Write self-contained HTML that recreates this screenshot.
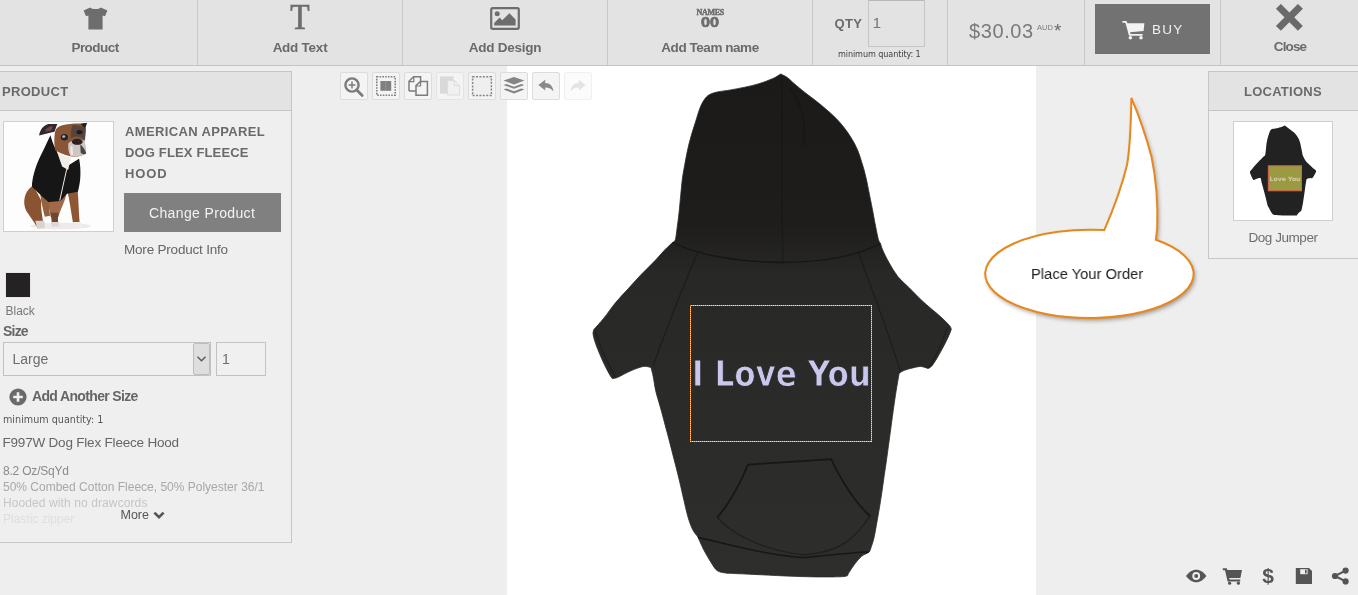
<!DOCTYPE html>
<html><head><meta charset="utf-8"><title>Designer</title>
<style>
*{box-sizing:border-box;margin:0;padding:0}
html,body{width:1358px;height:595px;overflow:hidden}
body{background:#eee;font-family:"Liberation Sans",sans-serif;color:#6b6b6b;position:relative}
.abs{position:absolute}
#toolbar{position:absolute;left:0;top:0;width:1358px;height:66px;background:#e3e3e3;border-bottom:1px solid #c4c4c4}
.sep{position:absolute;top:0;width:1px;height:65px;background:#c8c8c8}
.tlabel{position:absolute;top:40px;font-weight:bold;font-size:13.5px;line-height:16px;color:#6a6a6a;text-align:center;white-space:nowrap;letter-spacing:-0.25px}
#canvas{position:absolute;left:507px;top:66px;width:529px;height:529px;background:#fff}
#lpanel{position:absolute;left:-1px;top:71px;width:293px;height:472px;border:1px solid #c6c6c6;background:#efefef}
#lhead{position:absolute;left:0;top:0;width:291px;height:39px;background:#e3e3e3;border-bottom:1px solid #c6c6c6}
.mont{font-weight:bold;color:#6a6a6a}
#rpanel{position:absolute;left:1208px;top:71px;width:152px;height:188px;border:1px solid #c6c6c6;background:#efefef}
#rhead{position:absolute;left:0;top:0;width:150px;height:39px;background:#e3e3e3;border-bottom:1px solid #c6c6c6}
.t{position:absolute;white-space:nowrap}
#toolbar,#lpanel,#rpanel,#canvas,#pyo{will-change:transform}
.tb{position:absolute;top:72px;width:28px;height:28px;border:1px solid #dcdcdc;border-radius:2px;background:#f4f4f4}
</style></head><body>
<div id="canvas">
<svg class="abs" style="left:0;top:0" width="529" height="529" viewBox="0 0 529 529">
<defs><clipPath id="hclip"><path d="M273.7 8.0 C272.4 8.7 269.7 10.8 266.1 12.4 C262.5 14.0 256.7 16.2 252.0 17.7 C247.3 19.2 242.5 20.2 237.8 21.2 C233.1 22.2 228.1 23.1 223.7 23.9 C219.3 24.7 214.8 25.0 211.3 25.8 C207.8 26.6 204.8 27.3 202.5 28.6 C200.2 29.9 198.8 31.5 197.2 33.8 C195.6 36.1 194.3 38.6 192.8 42.4 C191.3 46.2 189.8 51.9 188.3 56.6 C186.8 61.3 185.2 66.0 183.9 70.7 C182.6 75.4 181.4 80.1 180.4 84.8 C179.4 89.5 178.5 94.5 177.7 99.0 C176.9 103.5 176.2 106.6 175.5 111.7 C174.8 116.7 174.3 123.4 173.7 129.3 C173.1 135.2 172.6 141.7 172.0 147.0 C171.4 152.3 170.8 156.8 170.2 161.2 C169.6 165.6 169.1 171.0 168.4 173.5 C167.7 176.0 166.2 175.8 165.8 176.2 C164.4 177.5 160.7 180.9 157.4 184.3 C154.1 187.7 150.1 192.5 146.1 196.6 C142.1 200.8 137.7 204.8 133.5 209.2 C129.3 213.6 125.1 218.5 120.9 223.1 C116.7 227.7 112.3 232.1 108.3 236.9 C104.3 241.7 100.5 247.7 96.9 252.1 C93.3 256.5 88.6 261.5 86.9 263.4 C86.8 264.2 85.7 265.7 86.1 268.4 C86.5 271.1 87.8 275.4 89.4 279.8 C91.0 284.2 93.6 290.3 95.7 294.9 C97.8 299.5 100.4 304.6 102.0 307.5 C103.6 310.4 104.7 311.8 105.3 312.6 C106.2 312.4 107.8 312.6 110.8 311.3 C113.8 310.0 119.2 306.8 123.4 305.0 C127.6 303.2 132.6 301.1 136.0 300.5 C139.4 299.9 142.7 301.3 144.0 301.5 C144.3 302.9 145.3 306.1 146.1 310.0 C146.9 313.9 147.6 320.0 148.8 325.2 C150.0 330.4 151.4 334.2 153.3 341.0 C155.2 347.8 157.5 356.7 160.0 366.0 C162.5 375.3 165.9 388.8 168.0 397.0 C170.1 405.2 171.0 408.7 172.5 415.0 C174.0 421.3 175.6 428.6 177.0 434.6 C178.4 440.6 179.6 446.3 181.0 451.1 C182.4 455.9 184.0 460.2 185.6 463.5 C187.2 466.8 189.9 469.5 190.7 470.7 C191.7 472.9 194.7 479.8 196.9 484.1 C199.1 488.4 201.9 493.1 204.1 496.5 C206.3 499.9 207.7 502.9 210.3 504.7 C212.9 506.5 218.1 506.8 219.6 507.2 C224.1 507.4 236.8 507.9 246.4 508.4 C256.0 508.8 267.0 509.5 277.3 509.9 C287.6 510.3 298.3 510.8 308.3 510.9 C318.3 511.0 331.6 511.0 337.1 510.5 C342.6 510.0 340.5 508.2 341.2 507.8 C342.2 506.2 345.2 501.4 347.4 498.5 C349.6 495.6 352.2 492.3 354.6 490.3 C357.0 488.2 360.3 487.6 361.9 486.2 C363.4 484.8 363.6 482.7 363.9 482.0 C364.4 480.3 366.0 476.2 367.0 471.7 C368.0 467.2 369.0 461.4 370.1 455.2 C371.2 449.0 372.5 441.5 373.6 434.6 C374.7 427.7 375.7 420.4 376.6 414.0 C377.5 407.6 378.0 404.5 379.2 396.2 C380.4 387.9 382.3 373.5 383.6 364.0 C384.9 354.5 386.0 346.0 387.0 339.0 C388.0 332.0 388.8 327.2 389.6 322.0 C390.5 316.8 391.7 309.9 392.1 307.5 C392.7 307.1 394.0 305.8 395.9 305.0 C397.8 304.2 400.5 303.2 403.4 302.5 C406.3 301.8 410.6 300.5 413.5 300.5 C416.4 300.5 419.8 302.2 421.1 302.5 C421.7 302.1 423.3 301.7 424.8 300.0 C426.3 298.3 428.0 295.5 429.9 292.4 C431.8 289.2 434.3 284.7 436.2 281.1 C438.1 277.5 439.9 273.9 441.2 271.0 C442.6 268.1 443.8 264.7 444.3 263.4 C444.0 262.8 444.3 261.7 442.5 259.6 C440.7 257.5 436.7 253.5 433.7 250.8 C430.8 248.1 428.2 246.1 424.8 243.2 C421.4 240.3 417.3 236.8 413.5 233.2 C409.7 229.6 406.0 225.6 402.2 221.8 C398.4 218.0 394.2 214.7 390.8 210.5 C387.4 206.3 384.5 201.0 382.0 196.6 C379.5 192.2 377.1 187.2 375.7 184.0 C374.3 180.8 373.9 178.6 373.5 177.5 C373.1 176.8 372.2 176.2 371.4 173.5 C370.6 170.8 369.7 165.6 368.8 161.2 C367.9 156.8 367.1 152.3 366.1 147.0 C365.1 141.7 363.8 135.2 362.6 129.3 C361.4 123.4 360.2 116.7 359.0 111.7 C357.8 106.6 357.0 103.5 355.6 99.0 C354.2 94.5 352.6 88.9 350.9 84.8 C349.2 80.7 347.7 77.7 345.6 74.2 C343.6 70.7 341.2 67.1 338.6 63.6 C336.0 60.1 333.0 56.4 329.7 53.0 C326.5 49.6 322.6 46.4 319.1 43.3 C315.6 40.2 312.0 37.3 308.5 34.5 C305.0 31.7 301.4 29.3 297.9 26.5 C294.4 23.7 290.2 20.2 287.3 17.7 C284.4 15.2 282.6 13.1 280.3 11.5 C278.0 9.9 274.8 8.6 273.7 8.0Z"/></clipPath><linearGradient id="hg" x1="0" y1="0" x2="0" y2="1"><stop offset="0" stop-color="#1b1a19"/><stop offset="0.3" stop-color="#1e1d1c"/><stop offset="0.4" stop-color="#282827"/><stop offset="0.7" stop-color="#2b2b2a"/><stop offset="1" stop-color="#2e2e2c"/></linearGradient></defs>
<path id="hoodp" d="M273.7 8.0 C272.4 8.7 269.7 10.8 266.1 12.4 C262.5 14.0 256.7 16.2 252.0 17.7 C247.3 19.2 242.5 20.2 237.8 21.2 C233.1 22.2 228.1 23.1 223.7 23.9 C219.3 24.7 214.8 25.0 211.3 25.8 C207.8 26.6 204.8 27.3 202.5 28.6 C200.2 29.9 198.8 31.5 197.2 33.8 C195.6 36.1 194.3 38.6 192.8 42.4 C191.3 46.2 189.8 51.9 188.3 56.6 C186.8 61.3 185.2 66.0 183.9 70.7 C182.6 75.4 181.4 80.1 180.4 84.8 C179.4 89.5 178.5 94.5 177.7 99.0 C176.9 103.5 176.2 106.6 175.5 111.7 C174.8 116.7 174.3 123.4 173.7 129.3 C173.1 135.2 172.6 141.7 172.0 147.0 C171.4 152.3 170.8 156.8 170.2 161.2 C169.6 165.6 169.1 171.0 168.4 173.5 C167.7 176.0 166.2 175.8 165.8 176.2 C164.4 177.5 160.7 180.9 157.4 184.3 C154.1 187.7 150.1 192.5 146.1 196.6 C142.1 200.8 137.7 204.8 133.5 209.2 C129.3 213.6 125.1 218.5 120.9 223.1 C116.7 227.7 112.3 232.1 108.3 236.9 C104.3 241.7 100.5 247.7 96.9 252.1 C93.3 256.5 88.6 261.5 86.9 263.4 C86.8 264.2 85.7 265.7 86.1 268.4 C86.5 271.1 87.8 275.4 89.4 279.8 C91.0 284.2 93.6 290.3 95.7 294.9 C97.8 299.5 100.4 304.6 102.0 307.5 C103.6 310.4 104.7 311.8 105.3 312.6 C106.2 312.4 107.8 312.6 110.8 311.3 C113.8 310.0 119.2 306.8 123.4 305.0 C127.6 303.2 132.6 301.1 136.0 300.5 C139.4 299.9 142.7 301.3 144.0 301.5 C144.3 302.9 145.3 306.1 146.1 310.0 C146.9 313.9 147.6 320.0 148.8 325.2 C150.0 330.4 151.4 334.2 153.3 341.0 C155.2 347.8 157.5 356.7 160.0 366.0 C162.5 375.3 165.9 388.8 168.0 397.0 C170.1 405.2 171.0 408.7 172.5 415.0 C174.0 421.3 175.6 428.6 177.0 434.6 C178.4 440.6 179.6 446.3 181.0 451.1 C182.4 455.9 184.0 460.2 185.6 463.5 C187.2 466.8 189.9 469.5 190.7 470.7 C191.7 472.9 194.7 479.8 196.9 484.1 C199.1 488.4 201.9 493.1 204.1 496.5 C206.3 499.9 207.7 502.9 210.3 504.7 C212.9 506.5 218.1 506.8 219.6 507.2 C224.1 507.4 236.8 507.9 246.4 508.4 C256.0 508.8 267.0 509.5 277.3 509.9 C287.6 510.3 298.3 510.8 308.3 510.9 C318.3 511.0 331.6 511.0 337.1 510.5 C342.6 510.0 340.5 508.2 341.2 507.8 C342.2 506.2 345.2 501.4 347.4 498.5 C349.6 495.6 352.2 492.3 354.6 490.3 C357.0 488.2 360.3 487.6 361.9 486.2 C363.4 484.8 363.6 482.7 363.9 482.0 C364.4 480.3 366.0 476.2 367.0 471.7 C368.0 467.2 369.0 461.4 370.1 455.2 C371.2 449.0 372.5 441.5 373.6 434.6 C374.7 427.7 375.7 420.4 376.6 414.0 C377.5 407.6 378.0 404.5 379.2 396.2 C380.4 387.9 382.3 373.5 383.6 364.0 C384.9 354.5 386.0 346.0 387.0 339.0 C388.0 332.0 388.8 327.2 389.6 322.0 C390.5 316.8 391.7 309.9 392.1 307.5 C392.7 307.1 394.0 305.8 395.9 305.0 C397.8 304.2 400.5 303.2 403.4 302.5 C406.3 301.8 410.6 300.5 413.5 300.5 C416.4 300.5 419.8 302.2 421.1 302.5 C421.7 302.1 423.3 301.7 424.8 300.0 C426.3 298.3 428.0 295.5 429.9 292.4 C431.8 289.2 434.3 284.7 436.2 281.1 C438.1 277.5 439.9 273.9 441.2 271.0 C442.6 268.1 443.8 264.7 444.3 263.4 C444.0 262.8 444.3 261.7 442.5 259.6 C440.7 257.5 436.7 253.5 433.7 250.8 C430.8 248.1 428.2 246.1 424.8 243.2 C421.4 240.3 417.3 236.8 413.5 233.2 C409.7 229.6 406.0 225.6 402.2 221.8 C398.4 218.0 394.2 214.7 390.8 210.5 C387.4 206.3 384.5 201.0 382.0 196.6 C379.5 192.2 377.1 187.2 375.7 184.0 C374.3 180.8 373.9 178.6 373.5 177.5 C373.1 176.8 372.2 176.2 371.4 173.5 C370.6 170.8 369.7 165.6 368.8 161.2 C367.9 156.8 367.1 152.3 366.1 147.0 C365.1 141.7 363.8 135.2 362.6 129.3 C361.4 123.4 360.2 116.7 359.0 111.7 C357.8 106.6 357.0 103.5 355.6 99.0 C354.2 94.5 352.6 88.9 350.9 84.8 C349.2 80.7 347.7 77.7 345.6 74.2 C343.6 70.7 341.2 67.1 338.6 63.6 C336.0 60.1 333.0 56.4 329.7 53.0 C326.5 49.6 322.6 46.4 319.1 43.3 C315.6 40.2 312.0 37.3 308.5 34.5 C305.0 31.7 301.4 29.3 297.9 26.5 C294.4 23.7 290.2 20.2 287.3 17.7 C284.4 15.2 282.6 13.1 280.3 11.5 C278.0 9.9 274.8 8.6 273.7 8.0Z" fill="url(#hg)" stroke="#2a2929" stroke-width="0.8" stroke-linejoin="round"/>
<g fill="none" stroke="#121111" stroke-width="1.3" stroke-linecap="round" opacity="0.75" clip-path="url(#hclip)">
<path d="M166 176.5 C190 189 230 196 275 196.5 C318 196 352 189 373.5 177.5"/>
<path d="M274.5 14 C276 60 274 130 276 196" stroke-width="1.4" opacity="0.45"/>
<path d="M283 22 C296 40 300 60 296 80" opacity="0.5"/>
<path d="M190 188 C176 220 160 262 146 300" opacity="0.6"/>
<path d="M352 188 C364 222 380 262 393 304" opacity="0.6"/>
<path d="M241 398.7 L324.2 393.1 M241 398.7 C232 420 222 438 210.4 451.4 M324.2 393.1 C336 418 350 438 363 450" stroke-width="1.8"/>
<path d="M210.4 451.4 C226 470 262 486 298 488.8 C330 486 346 476 363 450" opacity="0.7"/>
<path d="M181.3 469.4 C215 476 260 490 298 491.6 C330 488 350 486 364.4 486" stroke-width="1.6"/>
<path d="M88 265 C94 282 102 300 108 310" opacity="0.5"/>
<path d="M440 262 C434 280 426 296 420 304" opacity="0.5"/>
</g>
</svg>
<svg class="abs" style="left:0;top:0" width="529" height="529" viewBox="0 0 529 529" shape-rendering="crispEdges"><rect x="183.5" y="239.5" width="181" height="136" fill="none" stroke="#e07a10" stroke-width="1"/><rect x="183.5" y="239.5" width="181" height="136" fill="none" stroke="#fff4e0" stroke-opacity="0.8" stroke-width="1" stroke-dasharray="1 1"/></svg>
<div class="t" id="ily" style="left:184.5px;top:288px;font-family:'DejaVu Sans',sans-serif;font-weight:bold;font-size:36px;line-height:40px;color:#c9c7ec;-webkit-text-stroke:0.9px #2a2a29;transform:scaleX(0.864);transform-origin:0 0">I Love You</div>
</div>
<div id="toolbar">
  <div class="sep" style="left:197px"></div>
  <div class="sep" style="left:402px"></div>
  <div class="sep" style="left:607px"></div>
  <div class="sep" style="left:812px"></div>
  <div class="sep" style="left:947px"></div>
  <div class="sep" style="left:1084px"></div>
  <div class="sep" style="left:1220px"></div>
  <!-- product -->
  <svg class="abs" style="left:83px;top:7px" width="25" height="23" viewBox="0 0 25 23"><path d="M7.2 0.4 C9 2.6 16 2.6 17.8 0.4 L24.4 3.6 L22 9.2 L19.6 8.4 L19.6 22.6 L5.4 22.6 L5.4 8.4 L3 9.2 L0.6 3.6 Z" fill="#6d6d6d"/></svg>
  <div class="tlabel" id="l1" style="left:45px;width:100px;letter-spacing:-0.55px">Product</div>
  <!-- add text -->
  <div class="t" id="bigT" style="left:289px;top:-3px;font-family:'Liberation Serif',serif;font-size:36px;line-height:40px;color:#6d6d6d;-webkit-text-stroke:0.7px #6d6d6d;transform:scaleX(0.88);transform-origin:50% 0">T</div>
  <div class="tlabel" id="l2" style="left:250px;width:100px">Add Text</div>
  <!-- add design -->
  <svg class="abs" style="left:490px;top:7px" width="30" height="23" viewBox="0 0 30 23"><rect x="1.2" y="1.2" width="27.6" height="20.6" rx="1.5" fill="none" stroke="#6d6d6d" stroke-width="2.2"/><circle cx="7.2" cy="6.8" r="2.5" fill="#6d6d6d"/><path d="M4.2 18.6 L4.2 16 L9.6 10.6 L12.2 13.2 L19.4 6.2 L25.6 12.4 L25.6 18.6 Z" fill="#6d6d6d"/></svg>
  <div class="tlabel" id="l3" style="left:455px;width:100px">Add Design</div>
  <!-- team name -->
  <div class="t" id="nm" style="left:696.5px;top:9px;font-family:'Liberation Serif',serif;font-weight:bold;font-size:8px;line-height:8px;color:#6d6d6d;letter-spacing:-0.3px;-webkit-text-stroke:0.45px #6d6d6d">NAMES</div>
  <div class="t" id="oo" style="left:701px;top:15px;font-family:'Liberation Sans',sans-serif;font-weight:bold;font-size:14.5px;line-height:15px;color:#6d6d6d;-webkit-text-stroke:0.7px #6d6d6d;transform:scaleX(1.12);transform-origin:0 0">00</div>
  <div class="tlabel" id="l4" style="left:640px;width:140px;letter-spacing:-0.45px">Add Team name</div>
  <!-- qty -->
  <div class="t mont" id="qty" style="left:834.5px;top:16px;font-size:13px;line-height:16px;letter-spacing:0.3px">QTY</div>
  <div class="abs" style="left:868px;top:0;width:57px;height:47px;border:1px solid #c6c6c6;border-top-color:#b8b8b8;background:#e3e3e3"></div>
  <div class="t" id="q1" style="left:872.5px;top:14px;font-size:15.5px;line-height:18px;color:#777">1</div>
  <div class="t" id="minq" style="left:838px;top:48px;font-family:'DejaVu Sans Condensed','DejaVu Sans',sans-serif;font-size:9px;line-height:12px;color:#444;letter-spacing:-0.1px">minimum quantity: 1</div>
  <!-- price -->
  <div class="t" id="price" style="left:969px;top:19px;font-size:20px;line-height:24px;color:#7a7a7a;letter-spacing:0.6px">$30.03</div>
  <div class="t" id="aud" style="left:1037px;top:23px;font-size:7.5px;line-height:10px;color:#7a7a7a">AUD</div>
  <div class="t" id="ast" style="left:1054px;top:21px;font-size:19px;line-height:20px;color:#6a6a6a">*</div>
  <!-- buy -->
  <div class="abs" style="left:1095px;top:4px;width:115px;height:50px;background:#727272"></div>
  <svg class="abs" style="left:1122px;top:20px" width="24" height="20" viewBox="0 0 24 20"><path d="M0.4 1 L4.6 1 L5.4 3.2 L22.4 3.2 L21.6 11 L8 12.2 L8.6 14 L20.6 14 L20.6 15.8 L7 15.8 L3.4 2.8 L0.4 2.8 Z" fill="#f3f3f3"/><circle cx="8.4" cy="17.8" r="1.8" fill="#f3f3f3"/><circle cx="19" cy="17.8" r="1.8" fill="#f3f3f3"/></svg>
  <div class="t" id="buy" style="left:1152px;top:22px;font-size:13.5px;line-height:16px;color:#f0f0f0;letter-spacing:1.2px">BUY</div>
  <!-- close -->
  <svg class="abs" style="left:1275px;top:4px" width="29" height="28" viewBox="0 0 29 28"><path d="M3.4 2.4 L25.4 24.4 M25.4 2.4 L3.4 24.4" stroke="#6a6a6a" stroke-width="7" fill="none"/></svg>
  <div class="tlabel" id="l5" style="left:1240px;width:100px;top:39px;letter-spacing:-0.85px">Close</div>
</div>
<div id="lpanel">
  <div id="lhead"></div>
  <div class="t mont" id="ph" style="left:2px;top:12px;font-size:13px;line-height:16px;letter-spacing:0.3px">PRODUCT</div>
  <!-- dog photo -->
  <div class="abs" id="dogbox" style="left:3px;top:49px;width:111px;height:111px;border:1px solid #cfcfcf;background:#fdfdfd"></div>
<svg class="abs" id="dog" style="left:0px;top:44px" width="120" height="120" viewBox="0 0 595 595">
<defs><filter id="db" x="-5%" y="-5%" width="110%" height="110%"><feGaussianBlur stdDeviation="3.2"/></filter><clipPath id="dclip"><rect x="24" y="34" width="536" height="532"/></clipPath></defs>
<g filter="url(#db)" clip-path="url(#dclip)">
<ellipse cx="300" cy="545" rx="150" ry="16" fill="#eceaea"/>
<!-- hind leg / back -->
<path d="M165 345 C120 370 110 430 130 470 C150 500 165 520 180 545 L215 545 C215 510 200 470 205 420 Z" fill="#8a5230"/>
<path d="M175 520 L220 520 L222 555 L185 560 Z" fill="#d9d2cf"/>
<!-- belly / middle leg -->
<path d="M215 400 C240 440 250 470 250 500 L290 500 C300 460 320 430 330 385 Z" fill="#a06a48"/>
<path d="M250 480 C255 500 255 520 258 540 L290 540 C285 520 288 500 290 480 Z" fill="#6e4630"/>
<path d="M255 525 L292 525 L294 548 L256 548 Z" fill="#ddd6d2"/>
<!-- front right leg -->
<path d="M335 375 C345 420 352 470 362 530 L395 530 C390 480 390 420 385 370 Z" fill="#8e5632"/>
<path d="M362 525 L400 525 L412 555 L368 558 Z" fill="#f0ecea"/>
<!-- front left leg -->
<path d="M200 390 C205 430 215 470 222 500 L248 495 C245 460 243 430 240 395 Z" fill="#94603c"/>
<!-- hoodie -->
<path d="M250 95 C262 140 280 180 330 250 L392 212 C402 260 402 320 386 376 L332 386 L300 422 L240 426 L205 396 L158 350 C160 300 180 235 215 170 Z" fill="#141212"/>
<!-- chest white -->
<path d="M280 170 C300 195 330 205 352 205 L338 268 L308 250 Z" fill="#f1ece8"/>
<path d="M331 262 L296 420" stroke="#e8e4e0" stroke-width="5" fill="none"/>
<!-- ear -->
<path d="M194 97 C198 70 212 48 240 40 L284 40 L270 78 C248 84 220 88 194 97 Z" fill="#33262a"/>
<path d="M222 78 C228 62 240 52 262 50 L256 72 Z" fill="#6b4a4a"/>
<!-- head -->
<path d="M274 75 C280 45 330 35 419 37 L426 70 L420 120 L426 185 C410 200 370 205 349 200 C310 190 280 175 274 170 C268 140 268 100 274 75 Z" fill="#8a5534"/>
<path d="M360 45 C385 45 410 50 424 60 L422 118 C400 100 375 95 352 110 C350 85 352 60 360 45 Z" fill="#54453f"/>
<path d="M339 135 C355 116 400 112 421 124 L426 185 C410 199 370 204 349 198 C340 180 336 155 339 135 Z" fill="#cdc6c2"/>
<path d="M398 140 C410 150 420 165 428 186 C418 192 408 190 400 182 Z" fill="#4e4543"/>
<path d="M349 150 L360 150 L362 192 L350 192 Z" fill="#eeeae8"/>
<ellipse cx="383" cy="128" rx="27" ry="15" fill="#2a2124"/>
<ellipse cx="319" cy="105" rx="18" ry="16" fill="#20262a"/>
<ellipse cx="316" cy="102" rx="8" ry="7" fill="#a3b3ba"/>
<ellipse cx="394" cy="80" rx="15" ry="10" fill="#231c1e"/>
<path d="M400 38 L432 34 L422 62 Z" fill="#221b1c"/>
</g>
</svg>

  <div class="t mont" id="pn1" style="left:125px;top:52px;font-size:13px;line-height:16px;letter-spacing:0.36px">AMERICAN APPAREL</div>
  <div class="t mont" id="pn2" style="left:125px;top:73px;font-size:13px;line-height:16px;letter-spacing:0.15px">DOG FLEX FLEECE</div>
  <div class="t mont" id="pn3" style="left:125px;top:94px;font-size:13px;line-height:16px;letter-spacing:0.9px">HOOD</div>
  <div class="abs" style="left:124px;top:121px;width:157px;height:39px;background:#808080"></div>
  <div class="t" id="chg" style="left:149px;top:133px;font-size:14px;line-height:16px;color:#f2f2f2;letter-spacing:0.36px">Change Product</div>
  <div class="t" id="mpi" style="left:124px;top:170px;font-size:13.5px;line-height:16px;color:#666;letter-spacing:-0.2px">More Product Info</div>
  <div class="abs" style="left:4.5px;top:200px;width:26px;height:26px;background:#242222;border:1px solid #e6e6e6"></div>
  <div class="t" id="blk" style="left:5.5px;top:232px;font-size:12px;line-height:14px;color:#777">Black</div>
  <div class="t" id="sz" style="left:3px;top:251px;font-size:14px;line-height:16px;font-weight:bold;color:#666;letter-spacing:-0.8px">Size</div>
  <div class="abs" style="left:3px;top:270px;width:208px;height:34px;border:1px solid #c2c2c2;background:#f0f0f0"></div>
  <div class="abs" style="left:193px;top:271px;width:17px;height:32px;background:#dedede;border:1px solid #bdbdbd;border-radius:2px"></div>
  <svg class="abs" style="left:196px;top:283px" width="11" height="8" viewBox="0 0 11 8"><path d="M1.5 1.8 L5.5 5.8 L9.5 1.8" stroke="#555" stroke-width="1.3" fill="none"/></svg>
  <div class="t" id="lg" style="left:12.5px;top:279px;font-size:14px;line-height:16px;color:#6e6e6e">Large</div>
  <div class="abs" style="left:216px;top:270px;width:50px;height:34px;border:1px solid #c2c2c2;background:#f0f0f0"></div>
  <div class="t" id="q2" style="left:222px;top:279px;font-size:14px;line-height:16px;color:#6e6e6e">1</div>
  <svg class="abs" style="left:9px;top:316px" width="18" height="18" viewBox="0 0 18 18"><circle cx="9" cy="9" r="8.6" fill="#6a6a6a"/><path d="M9 4.2 V13.8 M4.2 9 H13.8" stroke="#f0f0f0" stroke-width="2.6"/></svg>
  <div class="t" id="aas" style="left:32px;top:316px;font-size:14px;line-height:16px;font-weight:bold;color:#666;letter-spacing:-0.65px">Add Another Size</div>
  <div class="t" id="minq2" style="left:3px;top:342px;font-family:'DejaVu Sans Condensed','DejaVu Sans',sans-serif;font-size:10.7px;line-height:12px;color:#555">minimum quantity: 1</div>
  <div class="t" id="f997" style="left:2.5px;top:363px;font-size:13.5px;line-height:16px;color:#666;letter-spacing:-0.2px">F997W Dog Flex Fleece Hood</div>
  <div class="t" id="d1" style="left:3px;top:391px;letter-spacing:-0.2px;font-size:12px;line-height:16px;color:#8a8a8a">8.2 Oz/SqYd</div>
  <div class="t" id="d2" style="left:3px;top:407px;font-size:12px;line-height:16px;color:#a8a8a8">50% Combed Cotton Fleece, 50% Polyester 36/1</div>
  <div class="t" id="d3" style="left:3px;top:423px;letter-spacing:0.1px;font-size:12px;line-height:16px;color:#c6c6c6">Hooded with no drawcords</div>
  <div class="t" id="d4" style="left:3px;top:439px;font-size:12px;line-height:16px;color:#dedede">Plastic zipper</div>
  <div class="t" id="more" style="left:120.5px;top:435px;font-size:12.5px;line-height:16px;color:#555">More</div>
  <svg class="abs" style="left:152.5px;top:438.5px" width="12" height="9" viewBox="0 0 12 9"><path d="M1.4 1.6 L6 6.2 L10.6 1.6" stroke="#555" stroke-width="2.6" fill="none"/></svg>
</div>
<div id="rpanel">
  <div id="rhead"></div>
  <div class="t mont" id="loc" style="left:35px;top:12px;font-size:13px;line-height:16px;letter-spacing:0.25px">LOCATIONS</div>
  <div class="abs" style="left:24px;top:49px;width:100px;height:100px;border:1px solid #cfcfcf;background:#fff"></div>
<svg class="abs" style="left:25px;top:50px" width="98" height="98" viewBox="0 0 98 98">
<path transform="translate(0,2.1) scale(1,0.968)" d="M50.63 1.48 C50.40 1.62 49.90 1.99 49.23 2.29 C48.56 2.59 47.49 3.00 46.62 3.27 C45.75 3.55 44.87 3.73 43.99 3.92 C43.12 4.11 42.20 4.28 41.38 4.42 C40.57 4.56 39.74 4.63 39.09 4.77 C38.44 4.92 37.90 5.04 37.46 5.29 C37.03 5.54 36.78 5.83 36.48 6.25 C36.18 6.68 35.94 7.14 35.67 7.84 C35.39 8.55 35.11 9.60 34.84 10.47 C34.56 11.34 34.27 12.21 34.02 13.08 C33.78 13.95 33.57 14.82 33.37 15.69 C33.18 16.56 33.03 17.49 32.87 18.32 C32.72 19.14 32.59 19.73 32.47 20.66 C32.34 21.60 32.24 22.83 32.13 23.92 C32.03 25.01 31.93 26.21 31.82 27.20 C31.71 28.18 31.60 29.00 31.49 29.82 C31.38 30.64 31.29 31.63 31.15 32.10 C31.02 32.56 30.75 32.51 30.67 32.60 C30.41 32.85 29.73 33.47 29.12 34.10 C28.51 34.72 27.77 35.60 27.03 36.37 C26.29 37.14 25.47 37.88 24.70 38.70 C23.92 39.52 23.14 40.42 22.37 41.27 C21.59 42.13 20.78 42.93 20.04 43.83 C19.30 44.72 18.59 45.82 17.93 46.64 C17.27 47.46 16.38 48.38 16.08 48.73 C16.05 48.88 15.85 49.15 15.93 49.65 C16.01 50.16 16.24 50.95 16.54 51.76 C16.83 52.58 17.32 53.70 17.70 54.56 C18.09 55.41 18.57 56.34 18.87 56.89 C19.17 57.43 19.38 57.67 19.48 57.83 C19.65 57.79 19.94 57.82 20.50 57.59 C21.06 57.36 22.05 56.76 22.83 56.42 C23.61 56.09 24.52 55.70 25.16 55.59 C25.80 55.48 26.39 55.75 26.64 55.78 C26.70 56.04 26.88 56.62 27.03 57.35 C27.18 58.08 27.31 59.21 27.53 60.16 C27.75 61.12 28.02 61.83 28.36 63.09 C28.71 64.34 29.15 65.98 29.60 67.71 C30.05 69.44 30.69 71.93 31.08 73.44 C31.47 74.96 31.63 75.62 31.91 76.78 C32.19 77.93 32.48 79.29 32.74 80.40 C33.01 81.51 33.22 82.56 33.48 83.45 C33.75 84.34 34.04 85.14 34.34 85.75 C34.64 86.35 35.12 86.86 35.28 87.08 C35.47 87.49 36.01 88.76 36.43 89.56 C36.84 90.35 37.35 91.22 37.76 91.85 C38.17 92.49 38.43 93.04 38.91 93.37 C39.38 93.70 40.34 93.75 40.63 93.83 C41.45 93.87 43.80 93.97 45.58 94.05 C47.36 94.14 49.39 94.25 51.30 94.33 C53.21 94.41 55.19 94.50 57.04 94.52 C58.88 94.53 61.35 94.54 62.36 94.44 C63.38 94.35 63.00 94.03 63.12 93.94 C63.31 93.66 63.86 92.76 64.27 92.22 C64.68 91.68 65.15 91.08 65.60 90.71 C66.05 90.33 66.66 90.20 66.95 89.95 C67.24 89.69 67.26 89.30 67.32 89.17 C67.42 88.85 67.70 88.09 67.89 87.26 C68.09 86.44 68.27 85.36 68.47 84.21 C68.67 83.07 68.92 81.67 69.12 80.40 C69.32 79.13 69.50 77.77 69.67 76.59 C69.84 75.41 69.94 74.84 70.15 73.30 C70.37 71.76 70.73 69.10 70.97 67.34 C71.21 65.58 71.41 64.01 71.59 62.71 C71.78 61.42 71.92 60.54 72.08 59.57 C72.23 58.60 72.46 57.33 72.54 56.89 C72.66 56.81 72.89 56.58 73.24 56.42 C73.59 56.27 74.09 56.10 74.63 55.96 C75.17 55.82 75.95 55.59 76.50 55.59 C77.04 55.59 77.67 55.90 77.90 55.96 C78.02 55.89 78.32 55.81 78.59 55.50 C78.86 55.19 79.18 54.68 79.53 54.09 C79.88 53.51 80.35 52.66 80.70 52.00 C81.05 51.34 81.37 50.68 81.62 50.13 C81.87 49.59 82.10 48.96 82.20 48.73 C82.14 48.61 82.19 48.41 81.86 48.03 C81.54 47.64 80.78 46.90 80.23 46.40 C79.69 45.89 79.21 45.53 78.59 44.99 C77.97 44.45 77.19 43.80 76.50 43.14 C75.80 42.48 75.11 41.73 74.41 41.03 C73.71 40.33 72.92 39.72 72.30 38.94 C71.68 38.17 71.14 37.19 70.67 36.37 C70.20 35.55 69.77 34.63 69.50 34.04 C69.24 33.45 69.17 33.04 69.10 32.84 C69.03 32.71 68.85 32.60 68.71 32.10 C68.56 31.59 68.39 30.64 68.23 29.82 C68.06 29.00 67.92 28.18 67.73 27.20 C67.54 26.21 67.30 25.01 67.08 23.92 C66.86 22.83 66.63 21.60 66.42 20.66 C66.20 19.73 66.04 19.14 65.79 18.32 C65.54 17.49 65.22 16.45 64.92 15.69 C64.61 14.92 64.32 14.38 63.94 13.73 C63.56 13.07 63.13 12.42 62.64 11.77 C62.15 11.11 61.60 10.43 60.99 9.80 C60.39 9.18 59.69 8.58 59.03 8.01 C58.38 7.44 57.73 6.90 57.07 6.38 C56.42 5.86 55.77 5.42 55.11 4.90 C54.46 4.38 53.69 3.74 53.15 3.27 C52.61 2.81 52.27 2.43 51.86 2.13 C51.44 1.83 50.84 1.59 50.63 1.48Z" fill="#232222"/>
<rect x="34.3" y="43.8" width="33.2" height="25" fill="#9b9a40" stroke="#d9604c" stroke-width="1"/>
<text x="51" y="58.5" font-family="DejaVu Sans, sans-serif" font-weight="bold" font-size="6" fill="#d2cfa4" text-anchor="middle" textLength="31" lengthAdjust="spacingAndGlyphs">Love You</text>
</svg>
  <div class="t" id="dj" style="left:39.5px;top:158px;font-size:13.5px;line-height:16px;color:#6e6e6e;letter-spacing:-0.45px">Dog Jumper</div>
</div>
<svg class="abs" style="left:960px;top:80px;overflow:visible" width="260" height="260" viewBox="960 80 260 260">
<defs><filter id="bsh" x="-20%" y="-20%" width="140%" height="140%"><feGaussianBlur stdDeviation="2.2"/></filter></defs>
<path d="M1104.3 230.1 C1113 210 1121.5 188 1127 165 C1130.5 146 1131 120 1131.4 97.9 C1139 116 1146 136 1151.4 156.4 C1156 178 1158 205 1157.2 228 L1155.9 239.8 A104.2 44.2 0 1 1 1104.3 230.1 Z" transform="translate(1.5,2.5)" fill="#5a4a3a" opacity="0.55" filter="url(#bsh)"/>
<path d="M1104.3 230.1 C1113 210 1121.5 188 1127 165 C1130.5 146 1131 120 1131.4 97.9 C1139 116 1146 136 1151.4 156.4 C1156 178 1158 205 1157.2 228 L1155.9 239.8 A104.2 44.2 0 1 1 1104.3 230.1 Z" fill="#fff" stroke="#e8871e" stroke-width="2" stroke-linejoin="miter"/>
</svg>
<div class="t" id="pyo" style="left:1031px;top:264.5px;font-size:15.5px;line-height:18px;color:#222;transform:scaleX(0.95);transform-origin:0 0">Place Your Order</div>
<!-- small tools -->
<div class="tb" style="left:340px"></div>
<div class="tb" style="left:372px"></div>
<div class="tb" style="left:404px"></div>
<div class="tb" style="left:436px;border-color:#e4e4e4"></div>
<div class="tb" style="left:468px"></div>
<div class="tb" style="left:500px"></div>
<div class="tb" style="left:532px"></div>
<div class="tb" style="left:564px;border-color:#f0f0f0;background:#fbfbfb"></div>
<svg class="abs" style="left:340px;top:72px" width="252" height="28" viewBox="340 72 252 28">
<!-- zoom -->
<circle cx="352" cy="85" r="6.6" fill="none" stroke="#7b7b7b" stroke-width="2.4"/>
<path d="M356.8 90 L362.2 95.4" stroke="#7b7b7b" stroke-width="2.8" stroke-linecap="round"/>
<path d="M352 81.6 V88.4 M348.6 85 H355.4" stroke="#7b7b7b" stroke-width="1.5"/>
<!-- select all -->
<rect x="376.8" y="76.8" width="18.4" height="18.4" fill="none" stroke="#7f7f7f" stroke-width="1.6" stroke-dasharray="1.6 1.2"/>
<rect x="380.4" y="81" width="10.8" height="9.8" fill="#7f7f7f"/>
<path d="M385.8 81 V90.8" stroke="#9a9a9a" stroke-width="0.8"/>
<!-- copy -->
<path d="M409 91 V81.2 L413.6 76.8 H420.6 V84" fill="none" stroke="#7b7b7b" stroke-width="1.5"/>
<path d="M409 91 H415.6" fill="none" stroke="#7b7b7b" stroke-width="1.5"/>
<path d="M413.8 77 V81.6 H409.4" fill="none" stroke="#7b7b7b" stroke-width="1.2"/>
<path d="M416 95.2 V85.6 L420.4 81.4 H427.4 V95.2 Z" fill="#f4f4f4" stroke="#7b7b7b" stroke-width="1.5"/>
<path d="M420.6 81.6 V86 H416.2" fill="none" stroke="#7b7b7b" stroke-width="1.2"/>
<!-- paste (disabled) -->
<rect x="440" y="76.4" width="13.6" height="17.2" fill="#d9d9d9"/>
<path d="M447.6 95 V80.6 H454.6 L459.6 85.4 V95 Z" fill="#f1f1f1" stroke="#dcdcdc" stroke-width="1"/>
<path d="M454.4 80.8 V85.6 H459.4" fill="none" stroke="#dcdcdc" stroke-width="1"/>
<!-- dashed square -->
<rect x="472.6" y="76.8" width="18.8" height="18.8" fill="#efefef" stroke="#858585" stroke-width="1.5" stroke-dasharray="2 1.4"/>
<!-- layers -->
<path d="M503.4 80.6 L514 76.9 L524.4 80.6 L514 84.4 Z" fill="#858585"/>
<path d="M503.4 85 L506.4 83.9 L514 86.7 L521.4 83.9 L524.4 85 L514 88.8 Z" fill="#858585"/>
<path d="M503.4 89.6 L506.4 88.5 L514 91.3 L521.4 88.5 L524.4 89.6 L514 93.4 Z" fill="#858585"/>
<!-- undo -->
<path d="M538.4 85 L545.2 79.8 V83 C550 83 553 86.4 553.4 91.4 C551.6 88.6 549 87.4 545.2 87.4 V90.4 Z" fill="#8a8a8a"/>
<!-- redo -->
<path d="M585.6 85 L578.8 79.8 V83 C574 83 571 86.4 570.6 91.4 C572.4 88.6 575 87.4 578.8 87.4 V90.4 Z" fill="#e3e3e3"/>
</svg>
<!-- bottom icons -->
<svg class="abs" style="left:1180px;top:562px;will-change:transform" width="178" height="30" viewBox="1180 562 178 30">
<g fill="#555">
<path d="M1186 576 C1190 571 1193 569.8 1196.2 569.8 C1199.4 569.8 1202.4 571 1206.4 576 C1202.4 581 1199.4 582.2 1196.2 582.2 C1193 582.2 1190 581 1186 576 Z"/>
<circle cx="1196.2" cy="576" r="3.9" fill="#eee"/>
<circle cx="1196.2" cy="576" r="2" />
<path d="M1222.8 568.2 H1226.8 L1227.4 570 H1242 L1240.4 578 H1229.2 L1229.6 579.6 H1240.2 V581.4 H1227.6 L1225 570.2 H1222.8 Z"/>
<circle cx="1229.6" cy="583.2" r="1.6"/><circle cx="1238.4" cy="583.2" r="1.6"/>
<path d="M1295.8 568 H1309 L1312 571 V584 H1295.8 Z"/>
<rect x="1300.2" y="569.2" width="7.4" height="5" fill="#eee"/>
<rect x="1305" y="569.8" width="1.6" height="3.6" fill="#555"/>
<circle cx="1335" cy="576" r="3.1"/><circle cx="1345.6" cy="570.6" r="3.1"/><circle cx="1345.6" cy="581.4" r="3.1"/>
<path d="M1335 576 L1345.6 570.6 M1335 576 L1345.6 581.4" stroke="#555" stroke-width="2" fill="none"/>
</g>
<text id="dollar" x="1268" y="583" font-family="Liberation Sans, sans-serif" font-weight="bold" font-size="21" fill="#555" text-anchor="middle">$</text>
</svg>
</body></html>
